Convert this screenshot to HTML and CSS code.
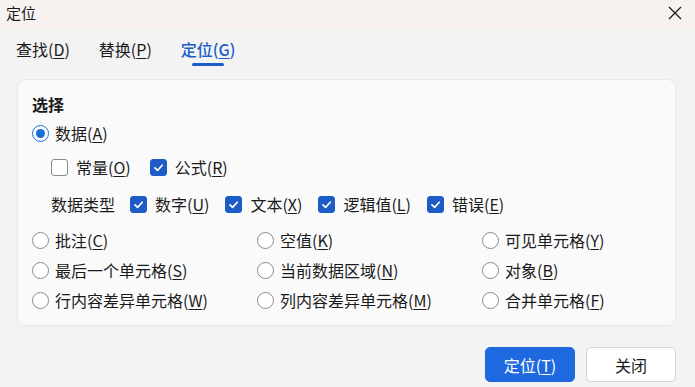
FILE: index.html
```html
<!DOCTYPE html>
<html lang="zh-CN">
<head>
<meta charset="utf-8">
<title>定位</title>
<link rel="stylesheet" href="styles.css">
</head>
<body>
<div class="dialog">
  <div class="titlebar">
    <span class="title">定位</span>
    <svg class="close" width="14" height="14" viewBox="0 0 14 14"><path d="M1 1 L13 13 M13 1 L1 13" stroke="#1a1a1a" stroke-width="1.3" fill="none"/></svg>
  </div>
  <div class="tabs">
    <span class="tab">查找(<u>D</u>)</span>
    <span class="tab">替换(<u>P</u>)</span>
    <span class="tab active">定位(<u>G</u>)</span>
  </div>
  <div class="panel">
    <div class="row r1"><span class="heading">选择</span></div>
    <div class="row r2"><label class="opt"><span class="radio checked"></span>数据(<u>A</u>)</label></div>
    <div class="row r3 indent">
      <label class="opt"><span class="cb"></span>常量(<u>O</u>)</label>
      <label class="opt"><span class="cb checked"><svg viewBox="0 0 16 16"><path d="M4.2 8.3 L7 11 L12 5.6" stroke="#fff" stroke-width="1.8" fill="none" stroke-linecap="round" stroke-linejoin="round"/></svg></span>公式(<u>R</u>)</label>
    </div>
    <div class="row r4 indent">
      <span class="lbl">数据类型</span>
      <label class="opt"><span class="cb checked"><svg viewBox="0 0 16 16"><path d="M4.2 8.3 L7 11 L12 5.6" stroke="#fff" stroke-width="1.8" fill="none" stroke-linecap="round" stroke-linejoin="round"/></svg></span>数字(<u>U</u>)</label>
      <label class="opt"><span class="cb checked"><svg viewBox="0 0 16 16"><path d="M4.2 8.3 L7 11 L12 5.6" stroke="#fff" stroke-width="1.8" fill="none" stroke-linecap="round" stroke-linejoin="round"/></svg></span>文本(<u>X</u>)</label>
      <label class="opt"><span class="cb checked"><svg viewBox="0 0 16 16"><path d="M4.2 8.3 L7 11 L12 5.6" stroke="#fff" stroke-width="1.8" fill="none" stroke-linecap="round" stroke-linejoin="round"/></svg></span>逻辑值(<u>L</u>)</label>
      <label class="opt"><span class="cb checked"><svg viewBox="0 0 16 16"><path d="M4.2 8.3 L7 11 L12 5.6" stroke="#fff" stroke-width="1.8" fill="none" stroke-linecap="round" stroke-linejoin="round"/></svg></span>错误(<u>E</u>)</label>
    </div>
    <div class="grid">
      <label class="opt"><span class="radio"></span>批注(<u>C</u>)</label>
      <label class="opt"><span class="radio"></span>空值(<u>K</u>)</label>
      <label class="opt"><span class="radio"></span>可见单元格(<u>Y</u>)</label>
      <label class="opt"><span class="radio"></span>最后一个单元格(<u>S</u>)</label>
      <label class="opt"><span class="radio"></span>当前数据区域(<u>N</u>)</label>
      <label class="opt"><span class="radio"></span>对象(<u>B</u>)</label>
      <label class="opt"><span class="radio"></span>行内容差异单元格(<u>W</u>)</label>
      <label class="opt"><span class="radio"></span>列内容差异单元格(<u>M</u>)</label>
      <label class="opt"><span class="radio"></span>合并单元格(<u>F</u>)</label>
    </div>
  </div>
  <div class="buttons">
    <button class="btn primary">定位(<u>T</u>)</button>
    <button class="btn">关闭</button>
  </div>
</div>
</body>
</html>
```

FILE: styles.css
```css
* { box-sizing: border-box; }
html, body {
  margin: 0;
  padding: 0;
  width: 695px;
  height: 387px;
  overflow: hidden;
  background: #f3f3f3;
  font-family: "Noto Sans CJK SC", "Noto Sans", sans-serif;
  color: #1a1a1a;
}
u {
  text-decoration-thickness: 1px;
  text-underline-offset: 2px;
}
.dialog {
  width: 695px;
  height: 387px;
  display: flex;
  flex-direction: column;
}
.titlebar {
  height: 29px;
  background: #f7f1f0;
  display: flex;
  align-items: center;
  justify-content: space-between;
  padding: 0 13px 4px 6px;
}
.title {
  font-size: 15px;
  line-height: 20px;
}
.close {
  width: 14px;
  height: 14px;
}
.tabs {
  height: 50px;
  display: flex;
  gap: 29px;
  padding-left: 16px;
  padding-top: 10px;
}
.tab {
  position: relative;
  font-size: 16px;
  line-height: 20px;
  height: 20px;
}
.tab.active {
  color: #1c5fc9;
  font-weight: 500;
}
.tab.active::after {
  content: "";
  position: absolute;
  left: 50%;
  margin-left: -16px;
  width: 32px;
  height: 2.5px;
  top: 24px;
  background: #1c5fc9;
  border-radius: 2px;
}
.panel {
  margin-left: 17px;
  width: 659px;
  height: 247px;
  background: #fafafa;
  border: 1px solid #e7e7e7;
  border-radius: 8px;
  padding: 7px 14px 0 14px;
  font-size: 16px;
}
.row {
  display: flex;
  align-items: center;
}
.r1 { height: 34px; }
.r2 { height: 24px; }
.r3 { height: 44px; gap: 19px; }
.r4 { height: 30px; gap: 15px; }
.r4 .opt + .opt { margin-left: 1px; }
.indent { padding-left: 19px; }
.heading {
  font-weight: 700;
  font-size: 16px;
}
.lbl { line-height: 20px; }
.opt {
  display: flex;
  align-items: center;
  line-height: 20px;
  white-space: nowrap;
}
.radio {
  width: 17px;
  height: 17px;
  border-radius: 50%;
  border: 1px solid #8a8a8a;
  background: #fff;
  margin-right: 6px;
  display: inline-flex;
  align-items: center;
  justify-content: center;
  flex: none;
}
.radio.checked {
  border-color: #1a6ed8;
}
.radio.checked::after {
  content: "";
  width: 9px;
  height: 9px;
  border-radius: 50%;
  background: #1a6ed8;
}
.cb {
  width: 17px;
  height: 17px;
  border-radius: 3px;
  border: 1px solid #8a8a8a;
  background: #fff;
  margin-right: 8px;
  flex: none;
  display: inline-flex;
}
.cb.checked {
  background: #1d5bc6;
  border-color: #1d5bc6;
}
.cb svg {
  width: 15px;
  height: 15px;
}
.grid {
  margin-top: 6px;
  display: grid;
  grid-template-columns: 225px 225px 1fr;
  grid-auto-rows: 30px;
  align-items: center;
}
.buttons {
  display: flex;
  justify-content: flex-end;
  gap: 11px;
  padding-right: 19px;
  margin-top: 21px;
}
.btn {
  width: 90px;
  height: 35px;
  border-radius: 5px;
  border: 1px solid #d6d6d6;
  background: #fff;
  font-family: "Noto Sans CJK SC", "Noto Sans", sans-serif;
  font-size: 16px;
  color: #1a1a1a;
  padding: 0;
}
.btn.primary {
  background: #1f69e0;
  border-color: #1f69e0;
  color: #fff;
}
```
